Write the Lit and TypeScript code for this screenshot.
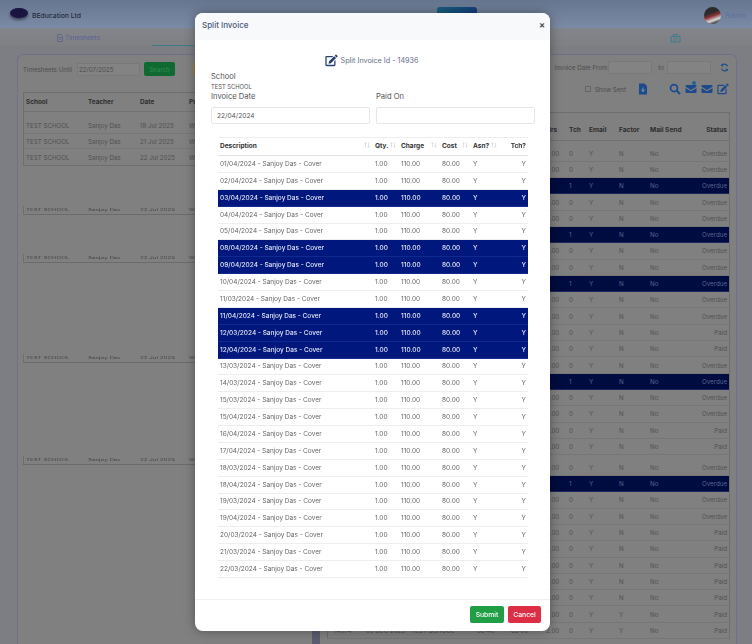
import { LitElement, html, css, svg } from "lit";
import { customElement } from "lit/decorators.js";

const modalRows: [string, boolean][] = [
  ["01/04/2024", false], ["02/04/2024", false], ["03/04/2024", true], ["04/04/2024", false], ["05/04/2024", false],
  ["08/04/2024", true], ["09/04/2024", true], ["10/04/2024", false], ["11/03/2024", false], ["11/04/2024", true],
  ["12/03/2024", true], ["12/04/2024", true], ["13/03/2024", false], ["14/03/2024", false], ["15/03/2024", false],
  ["15/04/2024", false], ["16/04/2024", false], ["17/04/2024", false], ["18/03/2024", false], ["18/04/2024", false],
  ["19/03/2024", false], ["19/04/2024", false], ["20/03/2024", false], ["21/03/2024", false], ["22/03/2024", false],
];

const blue = new Set([2, 5, 8, 14, 20]);
const overdue = new Set([0,1,2,3,4,5,6,7,8,9,10,13,14,15,16,19,20,21,22]);
const bgRows = Array.from({ length: 30 }, (_, i) => ({
  sel: blue.has(i),
  status: overdue.has(i) ? "Overdue" : "Paid",
  factor: i >= 28 ? "Y" : "N",
  gap: i === 19,
  last: i === 29,
}));

const arrows = svg`<svg class="sort" viewBox="0 0 8 8"><path d="M2 7V1M.8 2.4 2 1l1.2 1.4M6 1v6M4.8 5.6 6 7l1.2-1.4" fill="none" stroke="currentColor" stroke-width=".8"/></svg>`;
const editIcon = (c: string, s: string) => html`<svg class=${s} viewBox="0 0 24 24"><path d="M17 13.5V20H3V6h10l2.4-2.4H3.2A2.6 2.6 0 0 0 .6 6.2v13.6A2.6 2.6 0 0 0 3.2 22.4h13.6a2.6 2.6 0 0 0 2.6-2.6v-8.7z" fill=${c}/><path d="M21 1.2 23 3.2a1.3 1.3 0 0 1 0 1.8L21.5 6.500 18 3l1.500-1.800a1 1 0 0 1 1.500 0zM17 4l3.500 3.500L11 17l-4.500 1L7.500 13.500z" fill=${c}/></svg>`;
const mailIcon = (c: string) => html`<svg class="tool" viewBox="0 0 24 24"><path d="M1 7.500 12 14 23 7.500V6a2 2 0 0 0-2-2H3a2 2 0 0 0-2 2zM1 10v8a2 2 0 0 0 2 2h18a2 2 0 0 0 2-2v-8l-11 6.500z" fill=${c}/></svg>`;

@customElement("app-root")
export class AppRoot extends LitElement {
  static styles = css`
    :host { display: block; width: 752px; height: 644px; overflow: hidden; position: relative;
      font-family: Inter, "Liberation Sans", sans-serif; background: #7d7e83; }
    * { box-sizing: border-box; }
    .page { width: 752px; height: 644px; display: flex; flex-direction: column; filter: blur(.45px); overflow: hidden; }
    .top { height: 28px; flex: none; background: linear-gradient(#677690, #7c8ba5); display: flex; align-items: center; padding: 2px 6px 0 10px; position: relative; }
    .logo { width: 18px; height: 10px; border-radius: 50%; background: #1a1540; margin-right: 4px; margin-top: -4px; box-shadow: 0 2px 3px #3a4258; }
    .brand { font-size: 6.8px; color: #1f2a3c; font-weight: 500; }
    .navbtn { position: absolute; left: 437px; top: 7px; width: 40px; height: 12px; border-radius: 3px 3px 0 0; background: linear-gradient(90deg, #17607e, #14407e); }
    .spacer { flex: 1; }
    .avatar { width: 17px; height: 17px; border-radius: 50%; background: linear-gradient(160deg, #2b2b2b 35%, #8a2f35 52%, #d8d8d8 72%, #333 88%); margin-right: 4px; }
    .admin { font-size: 7px; color: #5b6f9e; }
    .tabs { height: 18px; flex: none; background: linear-gradient(#82858c, #7f8083); display: flex; position: relative; font-size: 6.4px; color: #5a6296; }
    .tabs .t1 { margin-left: 57px; margin-top: 5px; display: flex; gap: 2px; align-items: center; height: 9px; }
    .tabs .ul { position: absolute; left: 152px; width: 44px; bottom: 0; height: 1.500px; background: #3f7b86; }
    .tabs .cam { position: absolute; left: 670px; top: 5px; width: 11px; height: 10px; }
    .file { width: 6px; height: 8px; }
    .body { flex: 1; margin: 8px 15px 0 17px; display: flex; min-height: 0; }
    .left { width: 299px; flex: none; border: 1.500px solid #70708a; border-right: 4px solid #5c5c70; border-bottom: 0; border-radius: 6px 0 0 0; background: #808080; padding: 7px 0 0 5px; display: flex; flex-direction: column; }
    .right { flex: 1; border: 1.500px solid #70708a; border-left: 4px solid #5c5c70; border-bottom: 0; border-radius: 0 6px 0 0; background: #808080; padding: 6px 6px 0 7px; display: flex; flex-direction: column; }
    .until { display: flex; align-items: center; height: 14px; font-size: 6.2px; color: #4d4d4d; }
    .until .in { margin-left: 5px; width: 63px; height: 13px; background: #838383; border: 1px solid #797979; padding: 0 1px; line-height: 11px; }
    .search { margin-left: 4px; width: 31px; height: 14px; border-radius: 2px; background: #0f6a31; color: #2f8a52; display: flex; align-items: center; justify-content: center; }
    .orange { margin-left: 17px; width: 3px; height: 12px; background: #8a8060; }
    .ltable { margin-top: 16px; border-top: 1px solid #6e6e6e; border-left: 1px solid #6e6e6e; border-bottom: 1px solid #6e6e6e; font-size: 6.2px; color: #505050; }
    .lrow { display: grid; grid-template-columns: 62px 52px 49px 1fr; padding-left: 2px; }
    .lrow.head { height: 19px; align-items: center; font-weight: 700; color: #2e2e2e; border-bottom: 1px solid #737373; margin-bottom: 6px; font-size: 6.4px; }
    .lrow.item { height: 15.700px; align-items: center; border-bottom: 1px solid #777; }
    .lrow.item:last-child { border-bottom: 0; }
    .ghost { border-left: 1px solid #6e6e6e; border-bottom: 1px solid #6b6b6b; font-size: 6.2px; color: #444; height: 9px; }
    .ghost .lrow { height: 7px; align-items: center; }
    .ghost span { display: block; transform: scaleY(.55); transform-origin: left center; }
    .g1 { margin-top: 40px; }
    .g2 { margin-top: 39px; }
    .g3 { margin-top: 91px; }
    .g4 { margin-top: 93px; }
    .filt { display: flex; align-items: center; justify-content: flex-end; height: 13px; font-size: 6.2px; color: #4d4d4d; padding-right: 1px; }
    .filt .in { width: 44px; height: 13px; background: #838383; border: 1px solid #797979; margin: 0 5px 0 1px; }
    .filt .to { margin: 0 2px 0 1px; }
    .ref { width: 9px; height: 9px; margin-left: 4px; }
    .tools { display: flex; align-items: center; justify-content: flex-end; height: 14px; margin-top: 8px; font-size: 6.2px; color: #4d4d4d; gap: 0; padding-right: 1px; }
    .chk { width: 6px; height: 6px; border: 1px solid #666; margin-right: 4px; }
    .tool { width: 12px; height: 12px; margin-left: 4px; display: block; }
    .tool.first { margin-left: 11px; }
    .toolwrap { position: relative; display: flex; }
    .badge { position: absolute; right: 1px; top: -2px; width: 4px; height: 4px; border-radius: 50%; background: #2a5f9a; }
    .rtable { margin-top: 15.500px; border-top: 1px solid #6e6e6e; border-left: 1px solid #6e6e6e; border-right: 1px solid #6e6e6e; font-size: 6.2px; color: #505050; }
    .rrow { display: grid; grid-template-columns: 36px 45px 66px 34px 35px 23px 20px 30px 31px 43px 1fr; align-items: center; height: 16.300px; border-bottom: 1px solid #767676; }
    .rrow > span { padding-left: 2px; white-space: nowrap; }
    .rrow > span:first-child { padding-left: 6px; }
    .rrow > span:last-child { text-align: right; padding-right: 2px; }
    .rrow.head { height: 28px; padding-top: 8px; font-weight: 700; color: #2e2e2e; border-bottom: 1px solid #717171; margin-bottom: 5px; font-size: 6.6px; }
    .rrow.sel { background: #000b3f; color: #5a6690; border-bottom-color: #1a2560; }
    .rrow.gap { margin-top: 4.600px; }

    .overlay-shadow { position: absolute; left: 195px; top: 13px; width: 355px; height: 618px; border-radius: 8px; box-shadow: 0 0 12px rgba(0,0,0,.35); }
    .modal { position: absolute; left: 195px; top: 13px; width: 355px; height: 618px; border-radius: 8px; background: #fff; display: flex; flex-direction: column; filter: blur(.35px); overflow: hidden; color: #555; }
    .mhead { height: 27px; flex: none; background: #f7f9fa; display: flex; align-items: center; justify-content: space-between; padding: 0 5px 4px 7px; font-size: 8px; color: #4e5a7c; font-weight: 500; }
    .close { font-size: 9px; font-weight: 700; color: #555; }
    .mbody { flex: 1; padding: 0 15px 0 16px; display: flex; flex-direction: column; min-height: 0; }
    .subtitle { height: 13px; margin-top: 14px; display: flex; justify-content: center; align-items: center; gap: 3px; font-size: 7.2px; color: #666c8c; padding-right: 3px; }
    .editbig { width: 13px; height: 13px; }
    .lbl { font-size: 7.600px; color: #555; line-height: 10px; }
    .school { margin-top: 5px; }
    .val { font-size: 5.800px; line-height: 10px; color: #555; }
    .dates { display: grid; grid-template-columns: 159px 159px; gap: 0 6px; }
    .field { display: flex; flex-direction: column; gap: 5px; }
    .input { height: 17px; border: 1px solid #e6e6e6; border-radius: 2px; font-size: 6.600px; color: #555; padding-left: 5px; display: flex; align-items: center; }
    .table { margin: 13px 7px 0 7px; border-top: 1px solid #eee; }
    .mrow { display: grid; grid-template-columns: 155px 26px 41px 31px 29px 1fr; align-items: center; height: 16.875px; border-bottom: 1px solid #eee; font-size: 6.500px; color: #666; }
    .mrow > span { padding-left: 2px; white-space: nowrap; }
    .mrow > span:last-child { text-align: right; padding-right: 2px; }
    .mrow.head { height: 18px; padding-bottom: 2px; border-bottom: 1.500px solid #e2e2e2; font-weight: 700; color: #333; font-size: 6.500px; }
    .th { display: flex; justify-content: space-between; padding-right: 3px; }
    .mrow > span.th:last-child { justify-content: flex-end; }
    .sort { width: 6px; height: 6px; color: #ccc; }
    .mrow.sel { background: #00177d; color: #e2e6f5; border-bottom-color: #0c2a90; font-weight: 500; }
    .mfoot { height: 32px; flex: none; border-top: 1px solid #f0f0f0; display: flex; justify-content: flex-end; gap: 4px; padding: 6px 9px 0 0; }
    .btn { height: 17px; border-radius: 2px; color: #fff; font-size: 6.800px; display: flex; align-items: center; justify-content: center; font-weight: 500; }
    .ok { width: 34px; background: #1f9e46; }
    .no { width: 33px; background: #dc2f45; }
  `;

  render() {
    return html`
      <div class="page">
        <div class="top">
          <div class="logo"></div><div class="brand">BEducation Ltd</div>
          <div class="navbtn"></div>
          <div class="spacer"></div>
          <div class="avatar"></div><div class="admin">Admin</div>
        </div>
        <div class="tabs">
          <div class="t1">
            <svg class="file" viewBox="0 0 12 16"><path d="M1 1h7l3 3v11H1zM3 7h6M3 10h6" fill="none" stroke="#525f90" stroke-width="1.300"/></svg>
            Timesheets
          </div>
          <div class="ul"></div>
          <svg class="cam" viewBox="0 0 22 20"><path d="M2 7h18v11H2zM5 7l2-4h8l2 4" fill="none" stroke="#3f7b8c" stroke-width="2"/><circle cx="11" cy="12" r="3" fill="none" stroke="#3f7b8c" stroke-width="1.500"/></svg>
        </div>
        <div class="body">
          <div class="left">
            <div class="until">Timesheets Until <div class="in">22/07/2025</div><div class="search">Search</div><div class="orange"></div></div>
            <div class="ltable">
              <div class="lrow head"><span>School</span><span>Teacher</span><span>Date</span><span>Pr</span></div>
              <div class="lrow item"><span>TEST SCHOOL</span><span>Sanjoy Das</span><span>18 Jul 2025</span><span>W</span></div>
              <div class="lrow item"><span>TEST SCHOOL</span><span>Sanjoy Das</span><span>21 Jul 2025</span><span>W</span></div>
              <div class="lrow item"><span>TEST SCHOOL</span><span>Sanjoy Das</span><span>22 Jul 2025</span><span>W</span></div>
            </div>
            ${["g1", "g2", "g3", "g4"].map((g) => html`
              <div class="ghost ${g}"><div class="lrow"><span>TEST SCHOOL</span><span>Sanjoy Das</span><span>22 Jul 2025</span><span>W</span></div></div>`)}
          </div>
          <div class="right">
            <div class="filt">Invoice Date From <div class="in"></div><span class="to">to</span><div class="in"></div>
              <svg class="ref" viewBox="0 0 24 24"><path d="M20 9A9 9 0 0 0 5 6M4 15a9 9 0 0 0 15 3" fill="none" stroke="#22508a" stroke-width="3.500"/><path d="M3 2v7h7zM21 22v-7h-7z" fill="#22508a"/></svg>
            </div>
            <div class="tools">
              <div class="chk"></div><span>Show Sent</span>
              <svg class="tool first" viewBox="0 0 24 24"><path d="M4 1h11l5 5v17H4z" fill="#1d4a8c"/><path d="M12 9v8M8.500 13.500 12 17l3.500-3.500" stroke="#8aa" stroke-width="1.800" fill="none"/></svg>
              <svg class="tool" viewBox="0 0 24 24"><path d="M3 3l8 10v8M21 3l-8 10" fill="none" stroke="#6f8a94" stroke-width="2"/></svg>
              <svg class="tool" viewBox="0 0 24 24"><circle cx="10" cy="10" r="7" fill="none" stroke="#1d4a8c" stroke-width="3.500"/><path d="M15 15l7 7" stroke="#1d4a8c" stroke-width="4"/></svg>
              <div class="toolwrap">${mailIcon("#1d4a8c")}<div class="badge"></div></div>
              ${mailIcon("#1d4a8c")}
              ${editIcon("#1d4a8c", "tool")}
            </div>
            <div class="rtable">
              <div class="rrow head"><span></span><span></span><span></span><span></span><span></span><span>Hrs</span><span>Tch</span><span>Email</span><span>Factor</span><span>Mail Send</span><span>Status</span></div>
              ${bgRows.map((r) => html`
                <div class="rrow ${r.sel ? "sel" : ""} ${r.gap ? "gap" : ""}">
                  <span>${r.last ? "14874" : ""}</span><span>${r.last ? "09 DEC 2022" : ""}</span><span>${r.last ? "TEST SCHOOL" : ""}</span><span>${r.last ? "96:40" : ""}</span><span>${r.last ? "62:00" : ""}</span><span>${r.sel ? "0" : "2.00"}</span><span>${r.sel ? "1" : "0"}</span><span>Y</span><span>${r.factor}</span><span>No</span><span>${r.status}</span>
                </div>`)}
            </div>
          </div>
        </div>
      </div>
      <div class="overlay-shadow"></div>
      <div class="modal">
        <div class="mhead"><span>Split Invoice</span><span class="close">×</span></div>
        <div class="mbody">
          <div class="subtitle">${editIcon("#27406f", "editbig")}<span>Split Invoice Id - 14936</span></div>
          <div class="lbl school">School</div>
          <div class="val">TEST SCHOOL</div>
          <div class="dates">
            <div class="field"><div class="lbl">Invoice Date</div><div class="input">22/04/2024</div></div>
            <div class="field"><div class="lbl">Paid On</div><div class="input"></div></div>
          </div>
          <div class="table">
            <div class="mrow head">
              <span class="th">Description ${arrows}</span><span class="th">Qty. ${arrows}</span><span class="th">Charge ${arrows}</span><span class="th">Cost ${arrows}</span><span class="th">Asn? ${arrows}</span><span class="th">Tch?</span>
            </div>
            ${modalRows.map(([d, sel]) => html`
              <div class="mrow ${sel ? "sel" : ""}">
                <span>${d} - Sanjoy Das - Cover</span><span>1.00</span><span>110.00</span><span>80.00</span><span>Y</span><span>Y</span>
              </div>`)}
          </div>
        </div>
        <div class="mfoot"><div class="btn ok">Submit</div><div class="btn no">Cancel</div></div>
      </div>
    `;
  }
}
